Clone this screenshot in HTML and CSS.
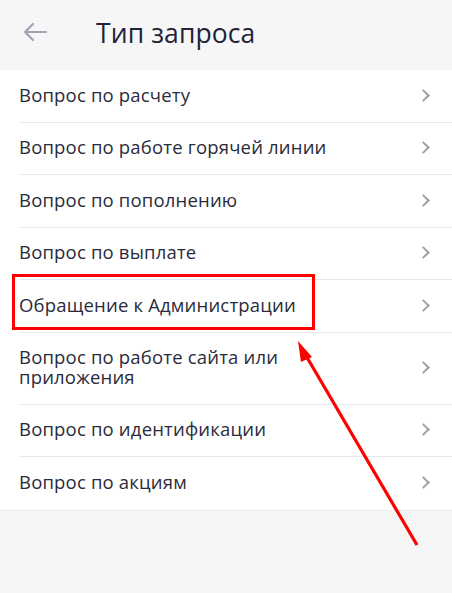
FILE: index.html
```html
<!DOCTYPE html>
<html lang="ru">
<head>
<meta charset="utf-8">
<link rel="stylesheet" href="styles.css">
</head>
<body>
<div class="screen">
  <header class="topbar">
    <svg class="back" width="26" height="20" viewBox="0 0 26 20">
      <path d="M24 10H3M11 2L3 10l8 8" fill="none" stroke="#a3a3b2" stroke-width="2.2" stroke-linecap="round" stroke-linejoin="round"/>
    </svg>
    <h1 class="title">Тип запроса</h1>
  </header>
  <ul class="list">
    <li class="row"><span class="label">Вопрос по расчету</span><span class="chev"></span></li>
    <li class="row"><span class="label">Вопрос по работе горячей линии</span><span class="chev"></span></li>
    <li class="row"><span class="label">Вопрос по пополнению</span><span class="chev"></span></li>
    <li class="row"><span class="label">Вопрос по выплате</span><span class="chev"></span></li>
    <li class="row"><span class="label">Обращение к Администрации</span><span class="chev"></span></li>
    <li class="row tall"><span class="label">Вопрос по работе сайта или<br>приложения</span><span class="chev"></span></li>
    <li class="row"><span class="label">Вопрос по идентификации</span><span class="chev"></span></li>
    <li class="row last"><span class="label">Вопрос по акциям</span><span class="chev"></span></li>
  </ul>
  <div class="highlight"></div>
  <svg class="pointer" width="452" height="593" viewBox="0 0 452 593">
    <line x1="417" y1="545" x2="305" y2="354" stroke="#ff0000" stroke-width="3.2"/>
    <polygon points="298,341 312,357 301,362" fill="#ff0000"/>
  </svg>
</div>
</body>
</html>
```
FILE: styles.css
```css
* { box-sizing: border-box; }
html, body { margin: 0; padding: 0; }
body {
  background: #f6f6f6;
  font-family: "Open Sans", "Noto Sans", sans-serif;
  color: #2a2b3b;
}
.screen {
  position: relative;
  width: 452px;
  height: 593px;
  overflow: hidden;
  background: #f6f6f6;
}
.topbar {
  height: 70px;
  display: flex;
  align-items: center;
  padding-left: 22px;
}
.back { display: block; margin-top: -6px; }
.title {
  margin: -4px 0 0 48px;
  font-size: 26.5px;
  font-weight: 500;
  letter-spacing: 0.1px;
  color: #22233a;
}
.list {
  list-style: none;
  margin: 0;
  padding: 0 0 0 19px;
  background: #fff;
  border-bottom: 1px solid #ececec;
}
.row {
  height: 52.5px;
  display: flex;
  align-items: center;
  justify-content: space-between;
  border-bottom: 1px solid #e8e8ec;
  padding-right: 24px;
  padding-bottom: 3px;
}
.row.tall { height: 72px; }
.row.last { border-bottom: none; }
.label {
  font-size: 18.5px;
  font-weight: 500;
  line-height: 19.5px;
  letter-spacing: 0.18px;
  color: #2a2b3b;
}
.chev {
  width: 9px;
  height: 9px;
  border-right: 2.4px solid #a0a0ab;
  border-top: 2.4px solid #a0a0ab;
  transform: rotate(45deg);
  margin-top: 2px;
}
.highlight {
  position: absolute;
  left: 12px;
  top: 274px;
  width: 303px;
  height: 56px;
  border: 3px solid #ff0000;
}
.pointer {
  position: absolute;
  left: 0;
  top: 0;
}
```
